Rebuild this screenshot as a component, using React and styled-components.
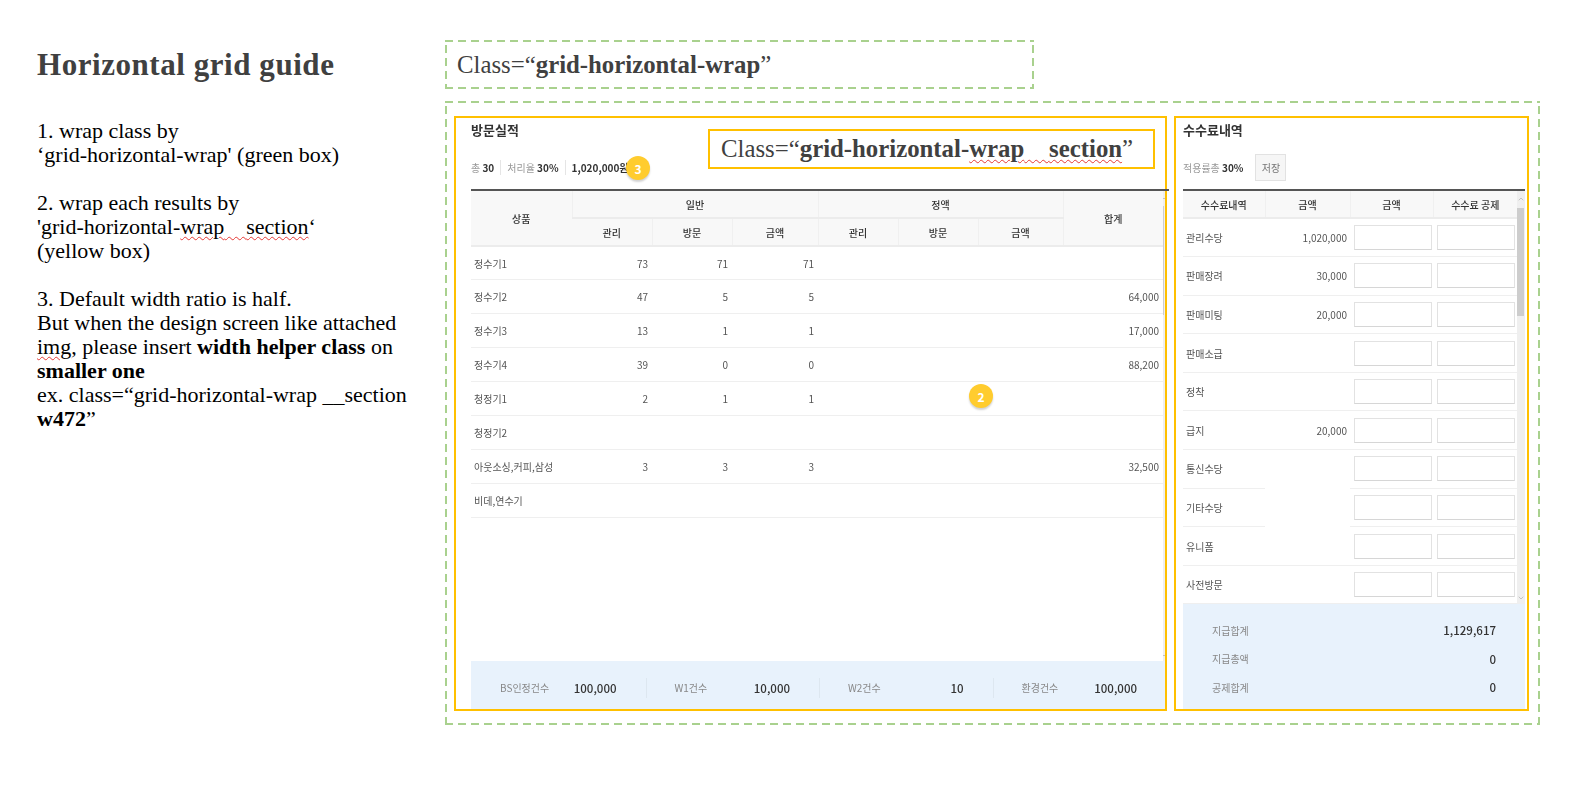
import React from "react";
import styled, { createGlobalStyle } from "styled-components";
import { ChevronUp, ChevronDown } from "lucide-react";

const visitRows = [
    ["정수기1", "73", "71", "71", "", "", "", ""],
    ["정수기2", "47", "5", "5", "", "", "", "64,000"],
    ["정수기3", "13", "1", "1", "", "", "", "17,000"],
    ["정수기4", "39", "0", "0", "", "", "", "88,200"],
    ["청정기1", "2", "1", "1", "", "", "", ""],
    ["청정기2", "", "", "", "", "", "", ""],
    ["아웃소싱,커피,삼성", "3", "3", "3", "", "", "", "32,500"],
    ["비데,연수기", "", "", "", "", "", "", ""],
];
const visitCols = [101, 80, 80, 86, 80, 80, 85, 100];

const feeRows = [
    ["관리수당", "1,020,000"],
    ["판매장려", "30,000"],
    ["판매미팅", "20,000"],
    ["판매소급", ""],
    ["정착", ""],
    ["급지", "20,000"],
    ["통신수당", "", true],
    ["기타수당", "", true],
    ["유니폼", ""],
    ["사전방문", ""],
];
const feeCols = [82, 85, 83, 84];

const counts = [
    ["BS인정건수", "100,000"],
    ["W1건수", "10,000"],
    ["W2건수", "10"],
    ["환경건수", "100,000"],
];

const totals = [
    ["지급합계", "1,129,617"],
    ["지급총액", "0"],
    ["공제합계", "0"],
];

const Scrollbar = ({ width, thumbTop, thumbHeight }) => (
    <Track $width={width}>
        <TrackArrow><ChevronUp size={8} strokeWidth={2} /></TrackArrow>
        <Thumb style={{ top: thumbTop, height: thumbHeight }} />
        <TrackArrow><ChevronDown size={8} strokeWidth={2} /></TrackArrow>
    </Track>
);

export default function App() {
    return (
        <>
            <GlobalStyle />
            <Page>
                <Guide>
                    <GuideTitle>Horizontal grid guide</GuideTitle>
                    <GuideText>
                        1. wrap class by<br />
                        ‘grid-horizontal-wrap' (green box)
                    </GuideText>
                    <GuideText>
                        2. wrap each results by<br />
                        'grid-horizontal-<Squiggle>wrap<Blank>__</Blank>section</Squiggle>‘<br />
                        (yellow box)
                    </GuideText>
                    <GuideText>
                        3. Default width ratio is half.<br />
                        But when the design screen like attached<br />
                        <Squiggle>img</Squiggle>, please insert <b>width helper class</b> on<br />
                        <b>smaller one</b><br />
                        ex. class=“grid-horizontal-wrap __section<br />
                        <b>w472</b>”
                    </GuideText>
                </Guide>
                <Demo>
                    <ClassBox>
                        <ClassName>Class=“<b>grid-horizontal-wrap</b>”</ClassName>
                    </ClassBox>
                    <WrapBox>
                        <Section $width={713}>
                            <SectionHead>
                                <SectionTitle>방문실적</SectionTitle>
                                <Stats>
                                    <Stat>총 <b>30</b></Stat>
                                    <Stat>처리율 <b>30%</b></Stat>
                                    <Stat><b>1,020,000원</b></Stat>
                                </Stats>
                            </SectionHead>
                            <HeadLine $over />
                            <TableArea>
                                <Table $width={692}>
                                    <colgroup>
                                        {visitCols.map((w, i) => <Col key={i} $w={w} />)}
                                    </colgroup>
                                    <thead>
                                        <tr>
                                            <Th rowSpan={2}>상품</Th>
                                            <Th colSpan={3} $h={27}>일반</Th>
                                            <Th colSpan={3}>정액</Th>
                                            <Th rowSpan={2}>합계</Th>
                                        </tr>
                                        <tr>
                                            {["관리", "방문", "금액", "관리", "방문", "금액"].map((t, i) => (
                                                <Th key={i} $h={28}>{t}</Th>
                                            ))}
                                        </tr>
                                    </thead>
                                    <tbody>
                                        {visitRows.map((row) => (
                                            <tr key={row[0]}>
                                                {row.map((v, i) => (
                                                    i === 0
                                                        ? <Td key={i} $h={33.9}>{v}</Td>
                                                        : <Td key={i} $h={33.9} $num>{v}</Td>
                                                ))}
                                            </tr>
                                        ))}
                                    </tbody>
                                </Table>
                                <Scrollbar width={2} thumbTop={15} thumbHeight={109} />
                            </TableArea>
                            <CountBar>
                                {counts.map(([label, value]) => (
                                    <CountCell key={label}>
                                        <CountLabel>{label}</CountLabel>
                                        <CountValue>{value}</CountValue>
                                    </CountCell>
                                ))}
                            </CountBar>
                            <SectionLabel>
                                <ClassName>Class=“<b>grid-horizontal-<Squiggle>wrap<Blank>__</Blank>section</Squiggle></b>”</ClassName>
                            </SectionLabel>
                            <Badge $left={170} $top={38}>3</Badge>
                            <Badge $left={513} $top={266}>2</Badge>
                        </Section>
                        <Section $width={355} $right>
                            <SectionHead>
                                <SectionTitle>수수료내역</SectionTitle>
                                <Stats>
                                    <Stat $plain>적용률총 <b>30%</b></Stat>
                                    <SaveButton>저장</SaveButton>
                                </Stats>
                            </SectionHead>
                            <HeadLine />
                            <TableArea>
                                <Table $width={334}>
                                    <colgroup>
                                        {feeCols.map((w, i) => <Col key={i} $w={w} />)}
                                    </colgroup>
                                    <thead>
                                        <tr>
                                            {["수수료내역", "금액", "금액", "수수료 공제"].map((t, i) => (
                                                <Th key={i} $h={27}>{t}</Th>
                                            ))}
                                        </tr>
                                    </thead>
                                    <tbody>
                                        {feeRows.map(([name, amount, open]) => (
                                            <tr key={name}>
                                                <Td $h={38.6}>{name}</Td>
                                                <Td $h={38.6} $num $tight $open={open}>{amount}</Td>
                                                <Td $h={38.6} $input><Field /></Td>
                                                <Td $h={38.6} $input><Field /></Td>
                                            </tr>
                                        ))}
                                    </tbody>
                                </Table>
                                <Scrollbar width={8} thumbTop={17} thumbHeight={108} />
                            </TableArea>
                            <TotalBox>
                                {totals.map(([label, value]) => (
                                    <TotalRow key={label}>
                                        <CountLabel>{label}</CountLabel>
                                        <CountValue>{value}</CountValue>
                                    </TotalRow>
                                ))}
                            </TotalBox>
                        </Section>
                    </WrapBox>
                </Demo>
            </Page>
        </>
    );
}

const GlobalStyle = createGlobalStyle`
    html, body {
        margin: 0;
        background: #fff;
    }
    * {
        box-sizing: border-box;
    }
`;

const serif = `"Palatino Linotype", "Liberation Serif", serif`;
const sans = `"Noto Sans CJK KR", "Noto Sans", sans-serif`;
const dashedGreen = `
    background-image:
        linear-gradient(90deg, #a9d18e 8px, transparent 8px),
        linear-gradient(90deg, #a9d18e 8px, transparent 8px),
        linear-gradient(0deg, #a9d18e 8px, transparent 8px),
        linear-gradient(0deg, #a9d18e 8px, transparent 8px);
    background-size: 13px 2px, 13px 2px, 2px 13px, 2px 13px;
    background-position: 0 0, 0 100%, 0 0, 100% 0;
    background-repeat: repeat-x, repeat-x, repeat-y, repeat-y;
`;

const Page = styled.div`
    width: 1570px;
    height: 805px;
    padding: 40px 0 0 37px;
    display: flex;
    overflow: hidden;
`;
const Guide = styled.div`
    width: 408px;
    flex: none;
    font-family: ${serif};
    color: #000;
`;
const GuideTitle = styled.h1`
    margin: 1px 0 30px;
    font-size: 31px;
    line-height: 48px;
    font-weight: bold;
    color: #404040;
    letter-spacing: 0.55px;
`;
const GuideText = styled.p`
    margin: 0 0 24px;
    font-size: 22px;
    line-height: 24px;
    white-space: nowrap;
`;
const Squiggle = styled.span`
    text-decoration: underline wavy #e53935;
    text-decoration-thickness: 1px;
    text-underline-offset: 2px;
`;
const Blank = styled.span`
    color: transparent;
`;
const Demo = styled.div`
    width: 1095px;
    flex: none;
    display: flex;
    flex-direction: column;
    gap: 12px;
`;
const ClassBox = styled.div`
    ${dashedGreen}
    width: 589px;
    height: 49px;
    padding-left: 12px;
    display: flex;
    align-items: center;
`;
const ClassName = styled.div`
    font-family: ${serif};
    font-size: 24.8px;
    color: #404040;
    white-space: nowrap;
`;
const WrapBox = styled.div`
    ${dashedGreen}
    width: 1095px;
    height: 624px;
    padding: 15px 11px 14px 9px;
    display: flex;
    gap: 7px;
`;
const Section = styled.section`
    position: relative;
    width: ${(p) => p.$width}px;
    flex: none;
    border: 2px solid #ffc000;
    padding-left: ${(p) => (p.$right ? 7 : 15)}px;
    padding-right: ${(p) => (p.$right ? 2 : 0)}px;
    display: flex;
    flex-direction: column;
    font-family: ${sans};
`;
const SectionHead = styled.div`
    padding-top: 3px;
    height: 71px;
    filter: blur(0.3px);
`;
const SectionTitle = styled.h2`
    margin: 0;
    font-size: 13px;
    line-height: 18px;
    font-weight: 600;
    color: #333;
`;
const Stats = styled.div`
    margin-top: 15px;
    height: 26px;
    display: flex;
    align-items: center;
`;
const Stat = styled.span`
    font-size: 10px;
    color: #999;
    white-space: nowrap;
    padding-right: ${(p) => (p.$plain ? 12 : 6)}px;
    margin-right: 6px;
    border-right: ${(p) => (p.$plain ? "none" : "1px solid #e5e5e5")};
    line-height: 15px;
    &:nth-child(3) {
        border: none;
    }
    b {
        color: #333;
        font-weight: 700;
    }
`;
const SaveButton = styled.button`
    width: 31px;
    height: 27px;
    padding: 0;
    background: #f6f6f6;
    border: 1px solid #e2e2e2;
    font-family: ${sans};
    font-size: 10px;
    color: #777;
    margin-left: -6px;
`;
const HeadLine = styled.div`
    height: 2px;
    flex: none;
    background: #555;
    margin-right: ${(p) => (p.$over ? -4 : 0)}px;
    position: relative;
`;
const TableArea = styled.div`
    flex: 1;
    min-height: 0;
    display: flex;
    justify-content: space-between;
    filter: blur(0.3px);
`;
const Table = styled.table`
    width: ${(p) => p.$width}px;
    height: fit-content;
    table-layout: fixed;
    border-collapse: collapse;
`;
const Col = styled.col`
    width: ${(p) => p.$w}px;
`;
const Th = styled.th`
    height: ${(p) => p.$h || 27}px;
    padding: 0;
    background: #f8f8f8;
    border-left: 1px solid #f0f0f0;
    border-bottom: 2px solid #ececec;
    font-size: 10px;
    font-weight: 500;
    color: #333;
    text-align: center;
    &:first-child {
        border-left: none;
    }
`;
const Td = styled.td`
    height: ${(p) => p.$h}px;
    padding: ${(p) => (p.$input ? "0 1px 0 4px" : p.$tight ? "0 3px" : "0 4px 0 3px")};
    border-bottom: 1px solid ${(p) => (p.$open ? "#fff" : "#efefef")};
    font-size: 10px;
    color: #555;
    text-align: ${(p) => (p.$num ? "right" : "left")};
    white-space: nowrap;
`;
const Field = styled.input`
    display: block;
    width: 78px;
    height: 25px;
    background: #fff;
    border: 1px solid #e2e2e2;
    border-bottom-color: #d6d6d6;
`;
const Track = styled.div`
    position: relative;
    width: ${(p) => p.$width}px;
    flex: none;
    background: #efefef;
    display: flex;
    flex-direction: column;
    justify-content: space-between;
    align-items: center;
    overflow: hidden;
    padding: 4px 0 2px;
`;
const TrackArrow = styled.span`
    display: flex;
    height: 8px;
    color: #aaa;
`;
const Thumb = styled.div`
    position: absolute;
    left: 0;
    right: 1px;
    background: #cdcdcd;
`;
const CountBar = styled.div`
    height: 48px;
    flex: none;
    background: #e8f2fc;
    padding: 5px 0 0 1px;
    display: grid;
    grid-template-columns: repeat(4, 173.5px);
    align-items: center;
    filter: blur(0.3px);
`;
const CountCell = styled.div`
    height: 20px;
    padding: 0 29px 0 28px;
    display: flex;
    align-items: center;
    justify-content: space-between;
    border-left: 1px solid #dde7f0;
    &:first-child {
        border-left: none;
    }
`;
const CountLabel = styled.span`
    font-size: 10px;
    color: #888;
    white-space: nowrap;
`;
const CountValue = styled.span`
    font-size: 11.5px;
    font-weight: 500;
    color: #333;
    white-space: nowrap;
`;
const TotalBox = styled.div`
    height: 105px;
    flex: none;
    background: #e8f2fc;
    padding: 12px 29px 7px 29px;
    display: grid;
    grid-auto-rows: 28.5px;
    filter: blur(0.3px);
`;
const TotalRow = styled.div`
    display: flex;
    align-items: center;
    justify-content: space-between;
`;
const SectionLabel = styled.div`
    position: absolute;
    left: 252px;
    top: 11px;
    width: 447px;
    height: 40px;
    padding-left: 11px;
    background: #fff;
    border: 2px solid #ffc000;
    display: flex;
    align-items: center;
`;
const Badge = styled.span`
    position: absolute;
    left: ${(p) => p.$left}px;
    top: ${(p) => p.$top}px;
    width: 24px;
    height: 24px;
    border-radius: 50%;
    background: #ffcc2e;
    box-shadow: 0 2px 2px rgba(0, 0, 0, 0.18);
    color: #fff;
    font-size: 12px;
    font-weight: 700;
    display: flex;
    align-items: center;
    justify-content: center;
`;
